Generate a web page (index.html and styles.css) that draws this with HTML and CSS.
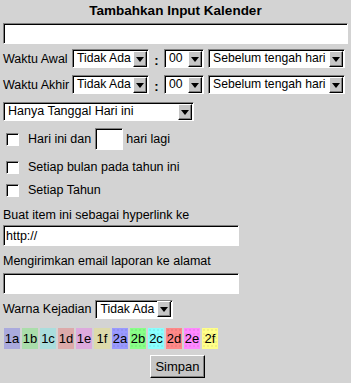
FILE: index.html
```html
<!DOCTYPE html>
<html lang="id">
<head>
  <meta charset="UTF-8">
  <title>Tambahkan Input Kalender</title>
  <link rel="stylesheet" href="styles.css">
</head>
<body>
  <form class="panel">
    <h1 class="title">Tambahkan Input Kalender</h1>
    <input class="field field-full" type="text">

    <div class="time-row row-first">
      <span class="label">Waktu Awal</span>
      <div class="combo combo-hour"><span class="combo-value">Tidak Ada</span><span class="combo-arrow"></span></div>
      <span class="colon">:</span>
      <div class="combo combo-min"><span class="combo-value">00</span><span class="combo-arrow"></span></div>
      <div class="combo combo-ampm"><span class="combo-value">Sebelum tengah hari</span><span class="combo-arrow"></span></div>
    </div>

    <div class="time-row">
      <span class="label">Waktu Akhir</span>
      <div class="combo combo-hour"><span class="combo-value">Tidak Ada</span><span class="combo-arrow"></span></div>
      <span class="colon">:</span>
      <div class="combo combo-min"><span class="combo-value">00</span><span class="combo-arrow"></span></div>
      <div class="combo combo-ampm"><span class="combo-value">Sebelum tengah hari</span><span class="combo-arrow"></span></div>
    </div>

    <div class="combo combo-range"><span class="combo-value">Hanya Tanggal Hari ini</span><span class="combo-arrow"></span></div>

    <div class="check-row check-days">
      <span class="check"></span>
      <span class="label">Hari ini dan</span>
      <input class="field field-days" type="text">
      <span class="label">hari lagi</span>
    </div>
    <div class="check-row check-month">
      <span class="check"></span>
      <span class="label">Setiap bulan pada tahun ini</span>
    </div>
    <div class="check-row check-year">
      <span class="check"></span>
      <span class="label">Setiap Tahun</span>
    </div>

    <div class="caption caption-link">Buat item ini sebagai hyperlink ke</div>
    <input class="field field-wide field-link" type="text" value="http://">

    <div class="caption caption-mail">Mengirimkan email laporan ke alamat</div>
    <input class="field field-wide field-mail" type="text">

    <div class="color-row">
      <span class="label">Warna Kejadian</span>
      <div class="combo combo-color"><span class="combo-value">Tidak Ada</span><span class="combo-arrow"></span></div>
    </div>

    <div class="chips">
      <span class="chip c1a">1a</span>
      <span class="chip c1b">1b</span>
      <span class="chip c1c">1c</span>
      <span class="chip c1d">1d</span>
      <span class="chip c1e">1e</span>
      <span class="chip c1f">1f</span>
      <span class="chip c2a dots">2a</span>
      <span class="chip c2b dots">2b</span>
      <span class="chip c2c dots">2c</span>
      <span class="chip c2d dots">2d</span>
      <span class="chip c2e dots">2e</span>
      <span class="chip c2f dots">2f</span>
    </div>

    <div class="actions">
      <button class="button" type="button">Simpan</button>
    </div>
  </form>
</body>
</html>
```

FILE: styles.css
```css
:root {
  --bg: #d3d3d3;
  --shade: #808080;
  --dark: #000000;
  --light: #ffffff;
  --face: #c6c6c6;
}

* {
  margin: 0;
  padding: 0;
  box-sizing: border-box;
}

body {
  background-color: var(--bg);
  font-family: "Liberation Sans", Arial, sans-serif;
  font-size: 12.5px;
  color: #000;
}

.panel {
  display: flex;
  flex-direction: column;
  align-items: flex-start;
  padding: 0 3px;
  width: 351px;
}

.title {
  align-self: stretch;
  height: 20px;
  line-height: 22px;
  font-size: 13.5px;
  font-weight: bold;
  text-align: center;
}

/* sunken text fields */
.field {
  height: 21px;
  border: 1px solid;
  border-color: var(--shade) var(--light) var(--light) var(--shade);
  box-shadow: inset 1px 1px 0 var(--dark);
  background: #fff;
  font-family: inherit;
  font-size: 12.5px;
  padding: 0 2px;
  outline: none;
}

.field-full {
  margin-top: 3px;
  width: 345px;
}

.field-wide {
  width: 236px;
}

.field-days {
  width: 28px;
  height: 22px;
  margin: 0 3px 0 4px;
}

/* combo boxes */
.combo {
  display: flex;
  align-items: center;
  height: 19px;
  background: #fff;
  border: 1px solid;
  border-color: var(--shade) var(--light) var(--light) var(--shade);
  box-shadow: inset 1px 1px 0 var(--dark);
  padding: 1px 1px 1px 2px;
  font-size: 12.2px;
}

.combo-value {
  flex: 1;
  min-width: 0;
  white-space: nowrap;
  overflow: hidden;
  padding-left: 2px;
  line-height: 15px;
}

.combo-arrow {
  flex: none;
  width: 14px;
  height: 16px;
  background: var(--face);
  border: 1px solid;
  border-color: var(--light) var(--dark) var(--dark) var(--light);
  box-shadow: inset -1px -1px 0 var(--shade);
  display: flex;
  align-items: center;
  justify-content: center;
}

.combo-arrow::after {
  content: "";
  border-left: 4px solid transparent;
  border-right: 4px solid transparent;
  border-top: 5px solid var(--dark);
  margin-top: 1px;
}

.time-row {
  display: flex;
  align-items: center;
  height: 19px;
  margin-top: 7px;
}

.row-first {
  margin-top: 5px;
}

.time-row .label {
  width: 69px;
}

.combo-hour {
  width: 77px;
}

.colon {
  width: 15px;
  text-align: center;
  font-weight: bold;
  font-size: 13px;
  padding-top: 4px;
}

.combo-min {
  width: 40px;
  margin-right: 4px;
}

.combo-ampm {
  width: 137px;
}

.combo-range {
  width: 191px;
  margin-top: 8px;
  font-size: 12.5px;
}

/* checkbox rows */
.check-row {
  display: flex;
  align-items: center;
  height: 20px;
}

.check-days {
  height: 22px;
  margin-top: 7px;
}

.check-month {
  margin-top: 7px;
}

.check-year {
  margin-top: 3px;
}

.check {
  width: 13px;
  height: 13px;
  margin: 0 9px 0 3px;
  background: #fff;
  border: 1px solid;
  border-color: var(--shade) var(--light) var(--light) var(--shade);
  box-shadow: inset 1px 1px 0 var(--dark);
}

.caption {
  height: 16px;
  line-height: 16px;
}

.caption-link {
  margin-top: 7px;
}

.field-link {
  margin-top: 2px;
}

.caption-mail {
  margin-top: 7px;
}

.field-mail {
  margin-top: 4px;
}

.color-row {
  display: flex;
  align-items: center;
  gap: 4px;
  height: 20px;
  margin-top: 5px;
}

.combo-color {
  width: 78px;
}

/* colour chips */
.chips {
  display: flex;
  gap: 2px;
  margin: 9px 0 0 1px;
}

.chip {
  width: 16px;
  height: 21px;
  line-height: 21px;
  text-align: center;
  font-size: 13px;
}

.dots {
  background-image: radial-gradient(rgba(0, 0, 0, 0.12) 0.6px, transparent 0.8px);
  background-size: 4px 4px;
}

.c1a { background-color: #aaaadd; }
.c1b { background-color: #aaddaa; }
.c1c { background-color: #aadddd; }
.c1d { background-color: #ddaaaa; }
.c1e { background-color: #ddaadd; }
.c1f { background-color: #dddaaa; }
.c2a { background-color: #9999ff; }
.c2b { background-color: #88ff88; }
.c2c { background-color: #88ffff; }
.c2d { background-color: #ff8888; }
.c2e { background-color: #ff88ff; }
.c2f { background-color: #ffff88; }

.actions {
  align-self: stretch;
  display: flex;
  justify-content: center;
  margin-top: 6px;
  padding-left: 4px;
}

.button {
  width: 55px;
  height: 23px;
  background: var(--face);
  border: 1px solid;
  border-color: var(--light) var(--dark) var(--dark) var(--light);
  box-shadow: inset -1px -1px 0 var(--shade);
  font-family: inherit;
  font-size: 13px;
  color: #000;
}
```
